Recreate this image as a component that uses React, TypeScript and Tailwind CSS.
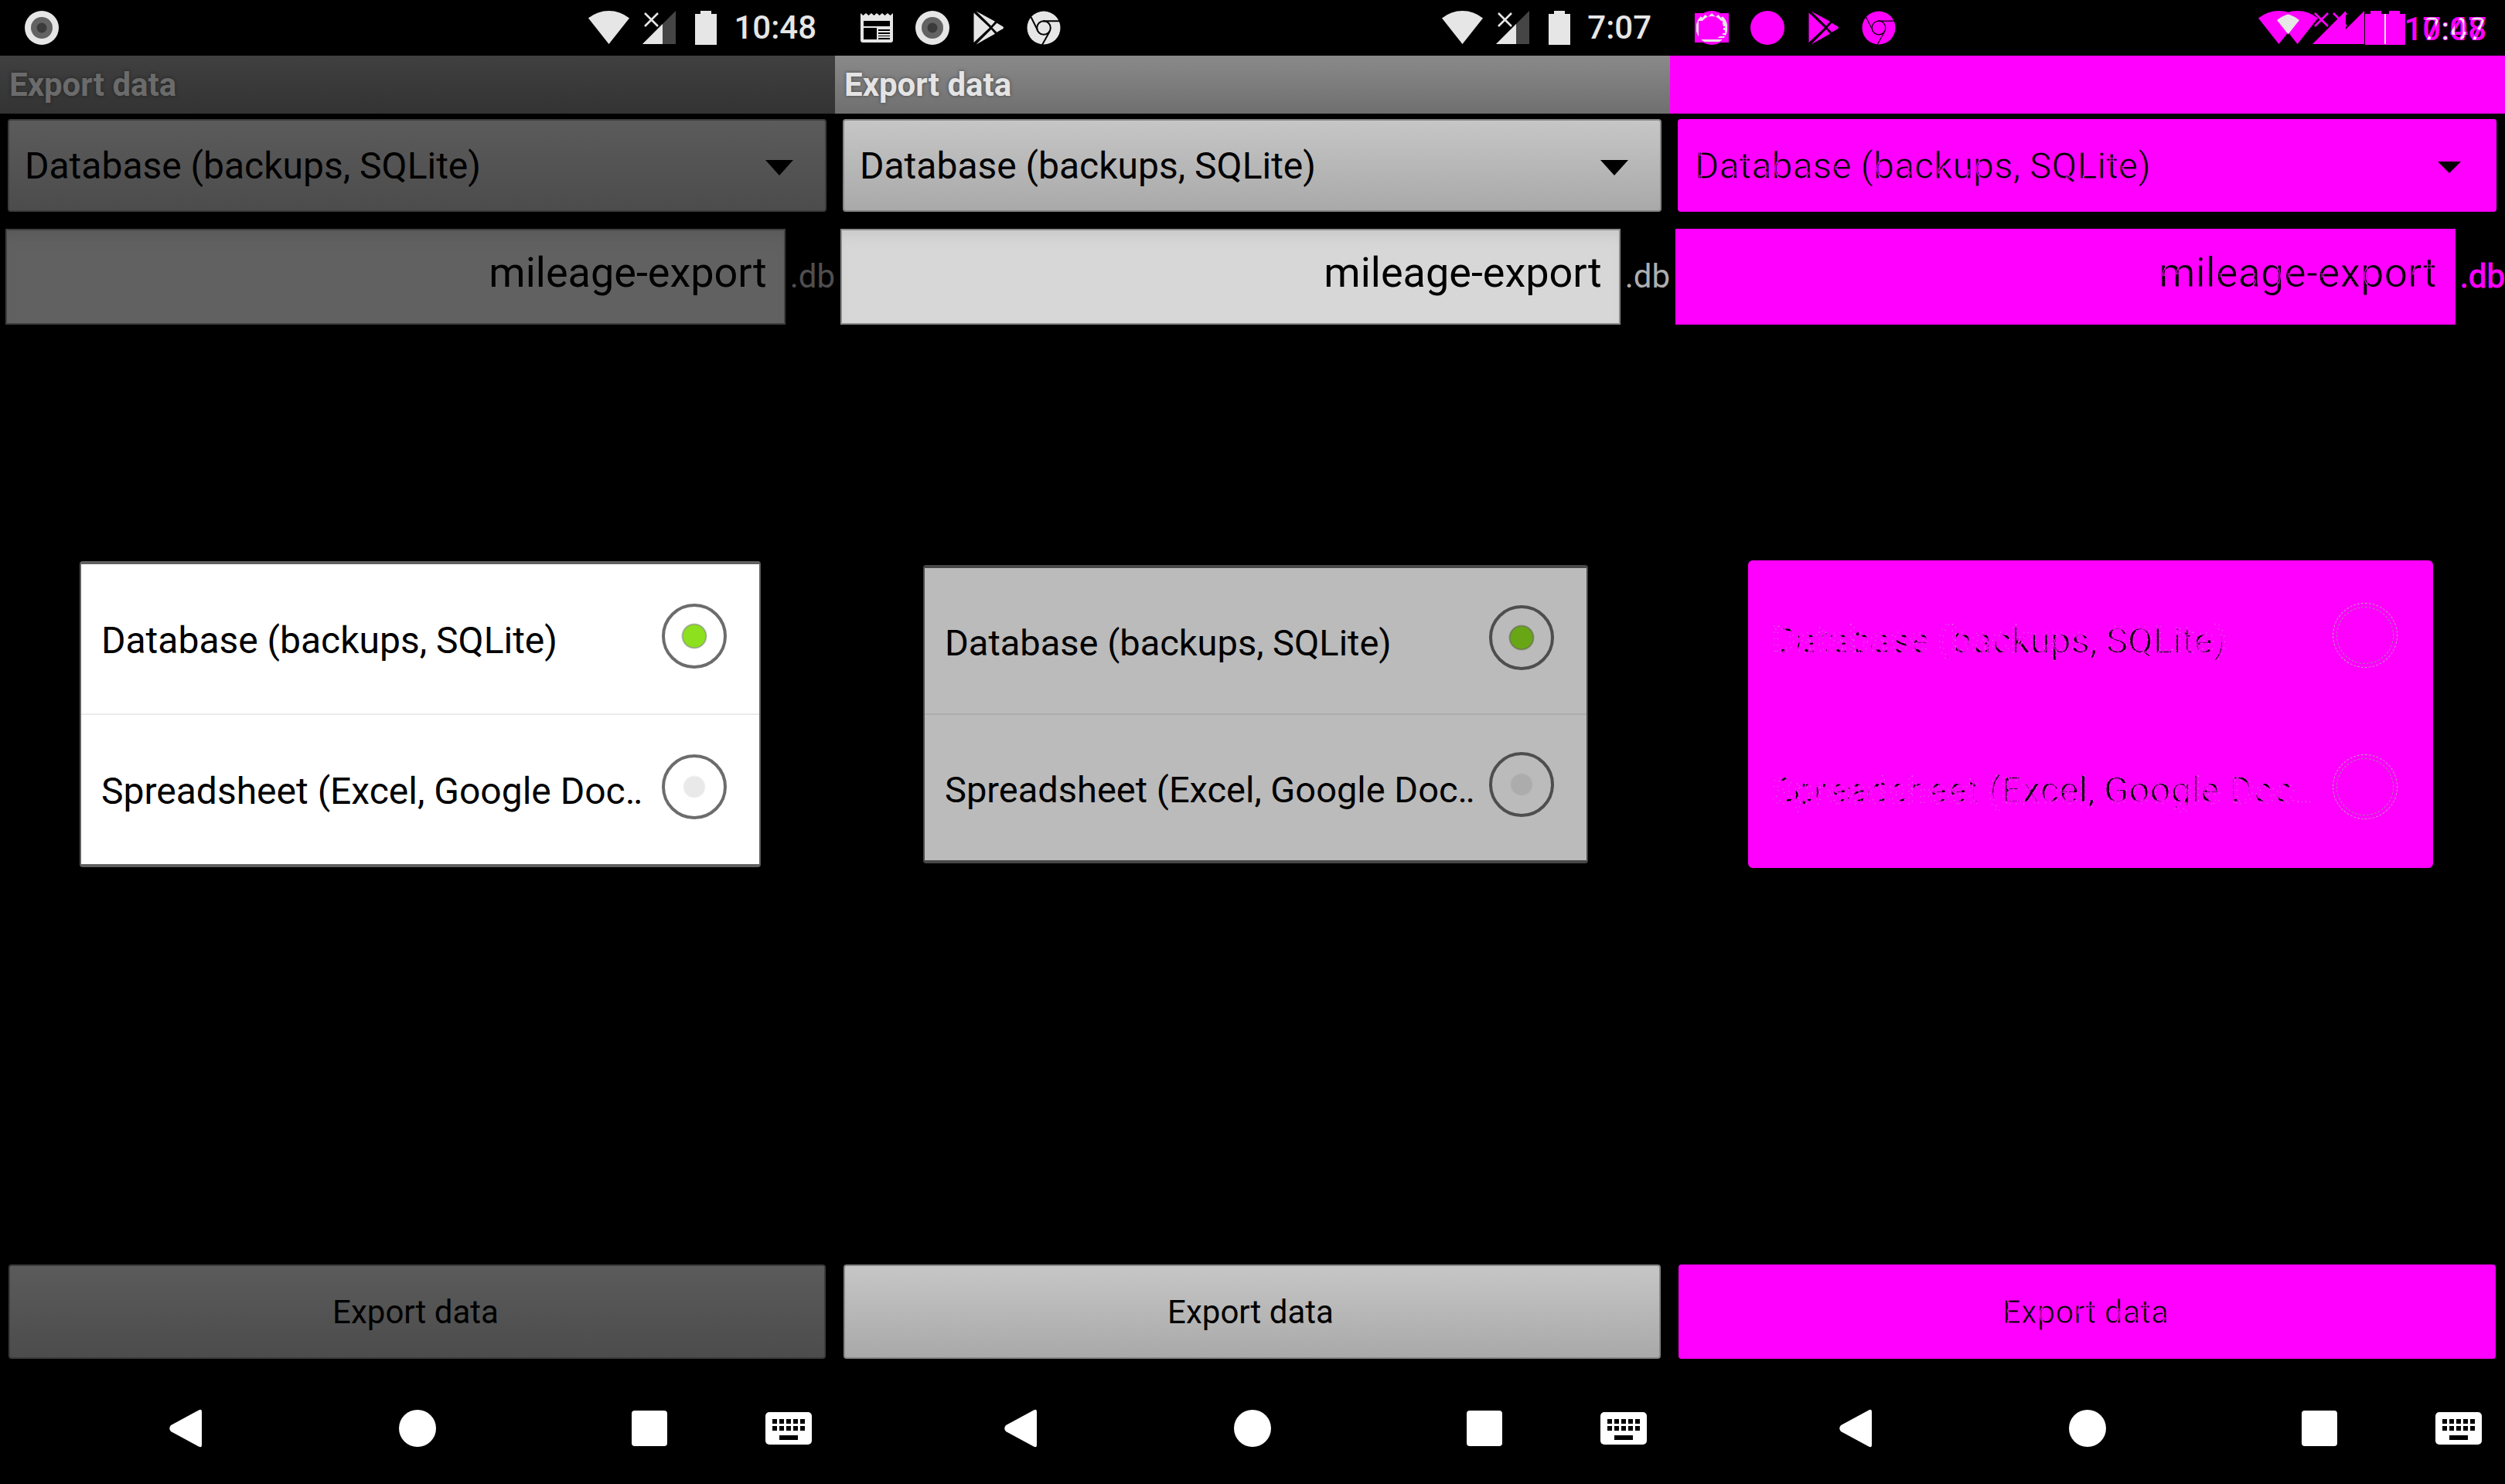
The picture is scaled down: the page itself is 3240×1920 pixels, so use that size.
import React, { useId, useState } from "react";

type Tone = "dim" | "plain" | "diff";

const OPTIONS = ["Database (backups, SQLite)", "Spreadsheet (Excel, Google Doc‥"];

const WIFI = "M0 9.5 A42 42 0 0 1 53 9.5 L26.5 43 Z";
const SIGNAL = "M0 43 L43 0 V43 Z";
const BATTERY = "M0 4 H7 V0 H21 V4 H28 V44 H0 Z";
const NEWS =
  "M15 17 l3.5 3 3.5 -3 3.5 3 3.5 -3 3.5 3 3.5 -3 3.5 3 3.5 -3 3.5 3 3.5 -3 3.5 3 3.5 -3 V52 a3 3 0 0 1 -3 3 H18 a3 3 0 0 1 -3 -3 Z M19 27 V34 H53 V27 Z M19 36 V51 H36 V36 Z M38 38 V40 H53 V38 Z M38 42 V44 H53 V42 Z M38 46 V47 H53 V46 Z M38 49 V51 H53 V49 Z";

const styles = {
  dim: {
    icon: "text-[#e6e6e6]",
    title: "bg-linear-to-b from-[#404040] to-[#333333] text-[#6b6b6b] [text-shadow:0_0_4px_#222]",
    control: "bg-linear-to-b from-[#5b5b5b] to-[#4c4c4c] border-[#3c3c3c] text-black",
    field: "bg-[#616161] border-[#3f3f3f] text-black shadow-[inset_0_16px_16px_-8px_#5a5a5a]",
    suffix: "text-[#4f4f4f]",
    overlay: "pl-[103px] pr-24",
    dialog: "bg-white border-[#606060] rounded-sm border-x-2 border-y-4",
    row: "h-[193px] text-[48px]",
    divider: "bg-[#ebebeb]",
    radio:
      "size-[84px] border-4 border-[#6c6c6c] bg-[radial-gradient(circle_at_center,#e9e9e9_13px,transparent_15px)] checked:bg-[radial-gradient(circle_at_center,#8ce01e_14px,#8a9a78_15px,transparent_17px)]",
  },
  plain: {
    icon: "text-[#e6e6e6]",
    title: "bg-linear-to-b from-[#8a8a8a] to-[#6f6f6f] text-[#e4e4e4] [text-shadow:0_0_4px_#444]",
    control: "bg-linear-to-b from-[#c6c6c6] to-[#a9a9a9] border-[#868686] text-black",
    field: "bg-[#d7d7d7] border-[#8c8c8c] text-black shadow-[inset_0_16px_16px_-8px_#cacaca]",
    suffix: "text-[#aeaeae]",
    overlay: "pl-[114px] pr-[106px]",
    dialog: "bg-[#bbbbbb] border-[#484848] rounded-sm border-x-2 border-y-4",
    row: "h-[188px] text-[47px]",
    divider: "bg-[#acacac]",
    radio:
      "size-[84px] border-4 border-[#4e4e4e] bg-[radial-gradient(circle_at_center,#acacac_13px,transparent_15px)] checked:bg-[radial-gradient(circle_at_center,#68a616_14px,#66734f_15px,transparent_17px)]",
  },
  diff: {
    icon: "text-[#ff00ff]",
    title: "bg-[#ff00ff] text-[#ff00ff]",
    control: "bg-[#ff00ff] border-[#ff00ff] text-black [-webkit-text-stroke:1px_#ff00ff]",
    field: "bg-[#ff00ff] border-[#ff00ff] text-black [-webkit-text-stroke:1px_#ff00ff]",
    suffix: "text-[#ff00ff] [-webkit-text-stroke:1px_#ff00ff]",
    overlay: "pl-[101px] pr-[93px]",
    dialog: "bg-[#ff00ff] border-[#ff00ff] rounded-md border-4",
    row: "h-[194px] text-[48px]",
    divider: "bg-[#ff00ff]",
    radio:
      "size-[84px] border border-dashed border-[#b0b0b0] outline outline-dashed outline-[#909090] -outline-offset-6",
  },
};

function RecordIcon({ flat }: { flat?: boolean }) {
  return (
    <svg viewBox="0 0 72 72" className="size-[72px]" fill="currentColor" aria-hidden="true">
      <circle cx="36" cy="36" r="22" />
      {!flat && <circle cx="36" cy="36" r="14" fill="#636363" />}
      {!flat && <circle cx="36" cy="36" r="6.5" fill="#3b3b3b" />}
    </svg>
  );
}

function NewsIcon() {
  return (
    <svg viewBox="0 0 72 72" className="size-[72px]" fill="currentColor" aria-hidden="true">
      <path d={NEWS} fillRule="evenodd" />
    </svg>
  );
}

/* Where the newspaper and the record ring share a colour the pixels stay light. */
function NewsDiffIcon() {
  return (
    <svg viewBox="0 0 72 72" className="size-[72px]" fill="currentColor" aria-hidden="true">
      <clipPath id="ring">
        <path
          clipRule="evenodd"
          d="M15.5 36 a20.5 20.5 0 1 0 41 0 a20.5 20.5 0 1 0 -41 0 Z M21 36 a15 15 0 1 0 30 0 a15 15 0 1 0 -30 0 Z"
        />
      </clipPath>
      <rect x="14" y="17" width="44" height="38" />
      <circle cx="36" cy="36" r="22" />
      <g clipPath="url(#ring)">
        <path
          fill="#e6e6e6"
          fillRule="evenodd"
          d="M16 22 l4 -2 4 3 3.5 -4 3.5 3 5 -5 5 5 3.5 -3 3.5 4 4 -3 4 2 V54 H16 Z M19 27 V51 H53 V49 H42 V47 H53 V45 H50 V43 H53 V39 H50 V36 H53 V34 H50 V27 Z"
        />
      </g>
    </svg>
  );
}

function PlayIcon() {
  return (
    <svg viewBox="0 0 72 72" className="size-[72px]" fill="currentColor" aria-hidden="true">
      <path d="M17.5 16.5 L38 35.7 L17.5 55 Z" />
      <path d="M20.5 14.5 L45 27.7 L40 33.5 Z" />
      <path d="M20.5 57.5 L45 43.7 L40 38 Z" />
      <path d="M47.3 29.8 L55 34.3 Q57 35.7 55 37.3 L47.3 41.7 L41.5 35.7 Z" />
    </svg>
  );
}

function ChromeIcon({ flat }: { flat?: boolean }) {
  return (
    <svg viewBox="0 0 72 72" className="size-[72px]" fill="currentColor" aria-hidden="true">
      <circle cx="36" cy="36" r="21.5" />
      <g fill="none" stroke="#000" strokeWidth={flat ? 1.2 : 2}>
        <circle cx="36" cy="36" r="8.8" />
        <path d="M35 27.2 H57 M19.5 22 L28 39 M43.5 41 L34 58" />
      </g>
    </svg>
  );
}

function StatusIcons() {
  return (
    <>
      <svg viewBox="0 0 54 44" className="mr-4 h-11 w-[54px]" fill="currentColor" role="img" aria-label="Wi-Fi">
        <path d={WIFI} />
      </svg>
      <svg viewBox="0 0 44 44" className="mr-6 size-11" fill="currentColor" role="img" aria-label="No signal">
        <path d={SIGNAL} fill="#454545" />
        <path d="M0 43 L26 17 V43 Z" />
        <path d="M3 3 L20 20 M20 3 L3 20" stroke="currentColor" strokeWidth="2.6" />
      </svg>
      <svg viewBox="0 0 28 44" className="mr-[22px] h-11 w-7" fill="currentColor" role="img" aria-label="Battery">
        <path d={BATTERY} />
      </svg>
    </>
  );
}

/* Two status clusters laid over each other; the shared area is light. */
function StatusDiff() {
  return (
    <svg
      viewBox="740 0 340 72"
      className="h-[72px] w-[340px] text-[42px] font-medium"
      fill="currentColor"
      role="img"
      aria-label="Status difference"
    >
      <clipPath id="wifi-a">
        <path d={WIFI} transform="translate(761 16.5)" />
      </clipPath>
      <clipPath id="clock-a">
        <text x="1056" y="52" textAnchor="end">10:48</text>
      </clipPath>
      {[0, 24].map((dx) => (
        <g key={dx} transform={`translate(${dx} 14)`}>
          <path d={WIFI} transform="translate(761 0)" />
          <path d={SIGNAL} transform="translate(831 0)" />
          <path d={BATTERY} transform="translate(899 0)" />
          <path d="M834 3 L851 20 M851 3 L834 20" stroke="currentColor" strokeWidth="2.6" />
        </g>
      ))}
      <g clipPath="url(#wifi-a)">
        <path fill="#e6e6e6" d={WIFI} transform="translate(785 16.5)" />
      </g>
      <rect x="924" y="18" width="2" height="39" fill="#e6e6e6" />
      <text x="1056" y="52" textAnchor="end">10:48</text>
      <text x="1056" y="52" textAnchor="end">7:07</text>
      <g clipPath="url(#clock-a)">
        <text x="1056" y="52" textAnchor="end" fill="#e6e6e6" stroke="#ff00ff" strokeWidth="1">7:07</text>
      </g>
    </svg>
  );
}

function StatusBar({ tone, time }: { tone: Tone; time: string }) {
  return (
    <header className={`flex h-[72px] items-center justify-between pl-[18px] ${styles[tone].icon}`}>
      <div className="flex">
        {tone === "diff" && <NewsDiffIcon />}
        {tone === "plain" && <NewsIcon />}
        <RecordIcon flat={tone === "diff"} />
        {tone !== "dim" && <PlayIcon />}
        {tone !== "dim" && <ChromeIcon flat={tone === "diff"} />}
      </div>
      {tone === "diff" ? (
        <StatusDiff />
      ) : (
        <div className="flex items-center pr-6">
          <StatusIcons />
          <span className="text-[42px] leading-none font-medium">{time}</span>
        </div>
      )}
    </header>
  );
}

/* The label at two sizes, painted only where both renderings are black. */
function LabelDiff({ text, id, drop }: { text: string; id: string; drop: number }) {
  return (
    <svg viewBox="0 0 720 80" className="h-20 w-[720px]" role="img" aria-label={text}>
      <clipPath id={id}>
        <text x="0" y="58" fontSize="48">{text}</text>
      </clipPath>
      <g clipPath={`url(#${id})`}>
        <text x="9" y={58 + drop} fontSize="47" stroke="#ff00ff" strokeWidth="1">{text}</text>
      </g>
      <text x="0" y="58" fontSize="48" fill="none" stroke="#c8a0c8" strokeWidth="0.8" strokeDasharray="1 7">{text}</text>
    </svg>
  );
}

function Dialog({ tone }: { tone: Tone }) {
  const s = styles[tone];
  const group = useId();
  const [choice, setChoice] = useState(0);
  return (
    <div className={`absolute inset-0 flex items-center ${s.overlay}`}>
      <div role="radiogroup" aria-label="Export format" className={`flex-1 ${s.dialog}`}>
        {OPTIONS.map((text, i) => (
          <React.Fragment key={text}>
            {i > 0 && <div className={`h-0.5 ${s.divider}`} />}
            <label className={`flex items-center justify-between pr-[42px] pl-[26px] text-black ${s.row}`}>
              {tone === "diff" ? (
                <LabelDiff text={text} id={`label-${i}`} drop={i === 0 ? 2 : -3} />
              ) : (
                <span className="mt-1 leading-none whitespace-nowrap">{text}</span>
              )}
              <input
                type="radio"
                name={group}
                checked={choice === i}
                onChange={() => setChoice(i)}
                className={`mb-2 shrink-0 appearance-none rounded-full ${s.radio}`}
              />
            </label>
          </React.Fragment>
        ))}
      </div>
    </div>
  );
}

function NavBar() {
  const slot = "flex flex-1 items-center justify-center";
  return (
    <nav className="flex h-36 pr-[30px] pl-[90px] text-white">
      <button type="button" aria-label="Back" className={slot}>
        <svg viewBox="0 0 42 50" className="h-[50px] w-[42px]" fill="currentColor">
          <path d="M38 1.5 Q42 -1 42 4 V46 Q42 51 38 48.5 L2 29 Q-1.5 25 2 21 Z" />
        </svg>
      </button>
      <button type="button" aria-label="Home" className={slot}>
        <span className="size-12 rounded-full bg-white" />
      </button>
      <button type="button" aria-label="Recent apps" className={slot}>
        <span className="size-[46px] rounded-sm bg-white" />
      </button>
      <button type="button" aria-label="Keyboard" className="flex items-center">
        <svg viewBox="0 0 60 42" className="h-[42px] w-[60px]">
          <rect width="60" height="42" rx="5" fill="currentColor" />
          {[9, 18, 27, 36, 45].map((x) => (
            <path key={x} d={`M${x} 9 h6 v6 h-6 Z M${x} 18 h6 v6 h-6 Z`} />
          ))}
          <rect x="18" y="30" width="24" height="6" />
        </svg>
      </button>
    </nav>
  );
}

function Phone({ tone, time }: { tone: Tone; time: string }) {
  const s = styles[tone];
  const id = useId();
  return (
    <section className="flex min-h-screen min-w-0 flex-col overflow-hidden">
      <StatusBar tone={tone} time={time} />
      <main className="relative flex flex-1 flex-col pb-[18px]">
        <h1 className={`h-[75px] pl-3 text-[42px] leading-[75px] font-bold ${s.title}`}>Export data</h1>
        <div className="relative mt-[7px] mr-[11px] ml-2.5">
          <select
            aria-label="Format"
            className={`h-[120px] w-full appearance-none rounded-sm border-2 pt-0.5 pl-5 text-[48px] ${s.control}`}
          >
            <option>Database (backups, SQLite)</option>
            <option>Spreadsheet (Excel, Google Docs)</option>
          </select>
          <svg viewBox="0 0 36 20" className="pointer-events-none absolute top-[53px] right-[43px] h-5 w-9" aria-hidden="true">
            <path d={tone === "diff" ? "M3 2 H33 L18 17 Z" : "M0 0 H36 L18 20 Z"} />
          </svg>
        </div>
        <div className="mt-[22px] flex items-center gap-1.5 pl-[7px]">
          <input
            id={id}
            aria-label="File name"
            defaultValue="mileage-export"
            className={`h-[124px] min-w-0 flex-1 border-2 pr-[22px] pb-3 text-right text-[54px] ${s.field}`}
          />
          <label htmlFor={id} className={`text-[42px] leading-none ${s.suffix}`}>.db</label>
        </div>
        <button
          type="button"
          className={`mt-auto mr-3 ml-[11px] h-[122px] rounded-sm border-2 pr-1 text-[42px] ${s.control}`}
        >
          Export data
        </button>
        <Dialog tone={tone} />
      </main>
      <NavBar />
    </section>
  );
}

export default function App() {
  return (
    <div className="grid min-h-screen grid-cols-3 bg-black font-[Roboto,sans-serif]">
      <Phone tone="dim" time="10:48" />
      <Phone tone="plain" time="7:07" />
      <Phone tone="diff" time="" />
    </div>
  );
}
